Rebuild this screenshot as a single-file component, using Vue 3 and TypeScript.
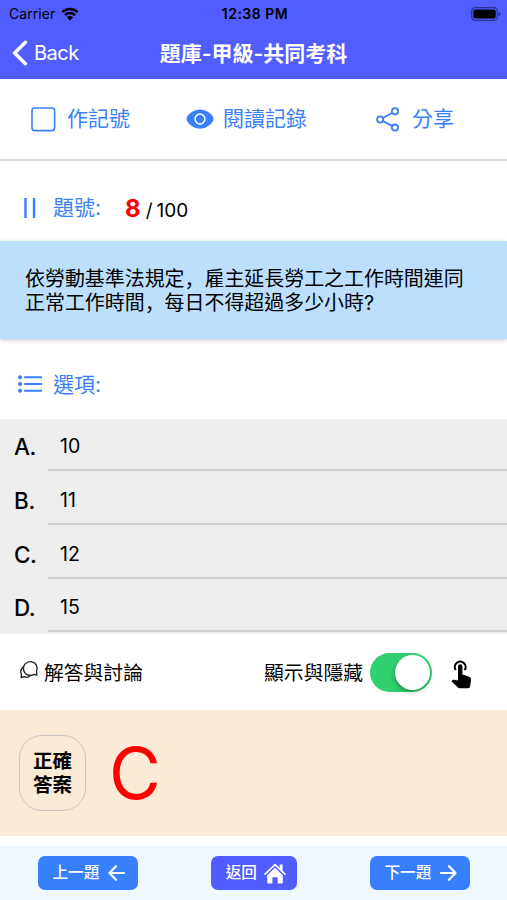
<script setup lang="ts">
import { ref } from 'vue'

interface Option {
  label: string
  text: string
}

const current = ref(8)
const total = 100
const showAnswer = ref(true)
const options: Option[] = [
  { label: 'A.', text: '10' },
  { label: 'B.', text: '11' },
  { label: 'C.', text: '12' },
  { label: 'D.', text: '15' },
]
</script>

<template>
  <div class="screen">
    <header class="top">
      <div class="status">
        <div class="carrier">
          <span>Carrier</span>
          <svg width="18" height="14" viewBox="0 0 18 14">
            <path d="M1.3 5.2a11 11 0 0 1 15.4 0M4 8.1a7.1 7.1 0 0 1 10 0" fill="none" stroke="#000" stroke-width="2.5" />
            <path d="M9 13.6 5.9 10.4a4.4 4.4 0 0 1 6.2 0z" />
          </svg>
        </div>
        <span class="clock">12:38 PM</span>
        <svg class="battery" width="30" height="14" viewBox="0 0 30 14">
          <rect x=".7" y=".7" width="25.6" height="12.6" rx="3.6" fill="none" stroke="#2c3291" stroke-width="1.2" />
          <rect x="2.3" y="2.4" width="22.4" height="9.2" rx="2" />
          <path d="M27.6 4.8q2 .8 2 2.2t-2 2.2z" fill="#2c3291" />
        </svg>
      </div>
      <div class="nav">
        <div class="back">
          <svg width="16" height="26" viewBox="0 0 16 26">
            <path d="M13.4 2.2 2.6 13l10.8 10.8" fill="none" stroke="#fff" stroke-width="3.4" stroke-linecap="round" stroke-linejoin="round" />
          </svg>
          <span>Back</span>
        </div>
        <h1 class="title">題庫-甲級-共同考科</h1>
        <span></span>
      </div>
    </header>

    <div class="tools">
      <div class="tool mark">
        <svg width="25" height="25" viewBox="0 0 25 25">
          <rect x="1" y="1" width="22.6" height="22.6" rx="2.6" fill="none" stroke="currentColor" stroke-width="1.6" />
        </svg>
        <span>作記號</span>
      </div>
      <div class="tool log">
        <svg width="28" height="20" viewBox="0 0 28 20">
          <path d="M14 .5C8 .5 2.8 4.2.7 8.8Q.2 10 .7 11.200C2.800 15.800 8 19.500 14 19.500s11.200-3.700 13.300-8.300q.5-1.200 0-2.400C25.200 4.200 20 .5 14 .5z" fill="currentColor" />
          <circle cx="14" cy="10" r="4.9" fill="none" stroke="#fff" stroke-width="1.5" />
        </svg>
        <span>閱讀記錄</span>
      </div>
      <div class="tool share">
        <svg width="24" height="25" viewBox="0 0 24 25">
          <g fill="none" stroke="currentColor" stroke-width="1.8">
            <circle cx="4.200" cy="12.500" r="3.100" />
            <circle cx="19" cy="4.200" r="3.100" />
            <circle cx="19" cy="20.600" r="3.100" />
            <path d="M6.900 11 16.300 5.700M6.900 14 16.300 19.100" />
          </g>
        </svg>
        <span>分享</span>
      </div>
    </div>

    <div class="number">
      <svg width="13" height="20" viewBox="0 0 13 20">
        <path d="M2.500 0v20M11 0v20" stroke="currentColor" stroke-width="2.400" />
      </svg>
      <span class="heading">題號:</span>
      <span class="count"><b>{{ current }}</b><span class="slash">/</span><span>{{ total }}</span></span>
    </div>

    <section class="question">
      <p><span>依勞動基準法規定</span><span class="comma">，</span><span>雇主延長勞工之工作時間連同</span></p>
      <p><span>正常工作時間</span><span class="comma">，</span><span>每日不得超過多少小時?</span></p>
    </section>

    <div class="choices">
      <svg width="25" height="18" viewBox="0 0 25 18">
        <g fill="currentColor">
          <circle cx="2.100" cy="2.200" r="2" />
          <circle cx="2.100" cy="9" r="2" />
          <circle cx="2.100" cy="15.800" r="2" />
        </g>
        <path d="M6.200 2.200h17.800M6.200 9h17.800M6.200 15.800h17.800" stroke="currentColor" stroke-width="1.900" />
      </svg>
      <span class="heading">選項:</span>
    </div>

    <ul class="options">
      <li v-for="o in options" :key="o.label">
        <span class="letter">{{ o.label }}</span>
        <span class="value">{{ o.text }}</span>
      </li>
    </ul>

    <div class="discussion">
      <svg class="bubbles" width="19" height="19" viewBox="0 0 19 19">
        <g fill="none" stroke="#222" stroke-width="1.300" stroke-linejoin="round">
          <path d="M16.900 15.100l-2.800-.8A6.900 6.900 0 1 1 16.500 11.600z" />
          <path d="M3.200 6.800C.7 9.300.3 12.200 1.500 14.200l-.4 3.300 3-.8c2 1 4.300.6 5.900-.9" />
        </g>
      </svg>
      <span class="talk">解答與討論</span>
      <span class="toggle-label">顯示與隱藏</span>
      <button class="switch" :class="{ on: showAnswer }" @click="showAnswer = !showAnswer"><i></i></button>
      <svg class="tap" width="21" height="29" viewBox="0 0 21 29">
        <path d="M4.700 10A5.400 5.400 0 1 1 13.700 10" fill="none" stroke="#000" stroke-width="2.100" />
        <path d="M7 6.500a2.200 2.200 0 0 1 4.400 0v8.200h1.200l6 2.300q1.600.8 1.500 2.500l-1 6.900q-.3 1.800-2 1.800H8.700q-1 0-1.700-.7L.4 21.200l1.200-1.100q.7-.6 1.600-.4L7 20.500z" />
      </svg>
    </div>

    <section class="answer">
      <div class="badge">正確<br />答案</div>
      <span v-if="showAnswer" class="result">C</span>
    </section>

    <footer class="footer">
      <button class="btn prev">
        <span>上一題</span>
        <svg width="17" height="16" viewBox="0 0 17 16">
          <path d="M8 1.200 1.500 8 8 14.800M1.700 8H16" fill="none" stroke="#fff" stroke-width="2.100" stroke-linecap="round" stroke-linejoin="round" />
        </svg>
      </button>
      <button class="btn home">
        <span>返回</span>
        <svg width="22" height="21" viewBox="0 0 22 21">
          <path d="M1 11.200 11 1.600l10 9.600" fill="none" stroke="#fff" stroke-width="1.700" stroke-linecap="round" />
          <path d="M15.600 1.600h3v6.200l-3-2.900zM11 4.700l7.800 7.500v7.300q0 .9-.9.900h-4.300v-6.200H8.400v6.200H4.100q-.9 0-.9-.9v-7.300z" fill="#fff" />
        </svg>
      </button>
      <button class="btn next">
        <span>下一題</span>
        <svg width="17" height="16" viewBox="0 0 17 16">
          <path d="M9 1.200 15.500 8 9 14.800M15.300 8H1" fill="none" stroke="#fff" stroke-width="2.100" stroke-linecap="round" stroke-linejoin="round" />
        </svg>
      </button>
    </footer>
  </div>
</template>

<style>
body {
  margin: 0;
  background: #fff;
}
</style>

<style scoped>
.screen {
  width: 507px;
  height: 900px;
  display: flex;
  flex-direction: column;
  overflow: hidden;
  background: #fff;
  color: #000;
  font-family: Inter, "Noto Sans CJK TC", sans-serif;
}
.screen * {
  box-sizing: border-box;
}
svg {
  display: block;
  flex: none;
}
span {
  white-space: nowrap;
}
.top {
  height: 79px;
  background: #505eff;
}
.status {
  height: 27px;
  display: grid;
  grid-template-columns: 1fr auto 1fr;
  align-items: center;
  padding: 1px 6px 0 9px;
  font-size: 14px;
  line-height: 26px;
}
.carrier {
  display: flex;
  align-items: center;
  gap: 6px;
  letter-spacing: 0.05px;
}
.carrier svg {
  margin-bottom: 1px;
}
.clock {
  font-weight: 600;
  font-size: 14px;
  letter-spacing: 0.5px;
}
.battery {
  justify-self: end;
  margin-bottom: 1px;
}
.nav {
  height: 52px;
  display: grid;
  grid-template-columns: 1fr auto 1fr;
  align-items: center;
  padding: 0 12px;
  color: #fff;
}
.back {
  display: flex;
  align-items: center;
  gap: 6px;
  font-size: 20px;
  letter-spacing: -0.5px;
}
.title {
  margin: 0;
  padding-top: 1px;
  font-size: 21px;
  line-height: 30px;
  font-weight: 600;
}
.tools {
  height: 82px;
  display: flex;
  align-items: center;
  padding: 0 53px 0 31px;
  border-bottom: 2px solid #dcdcdc;
  color: #397ff7;
}
.tool {
  display: flex;
  align-items: center;
  font-size: 21px;
  line-height: 30px;
}
.mark {
  gap: 11px;
}
.log {
  gap: 9px;
  margin-left: 56px;
}
.share {
  gap: 12px;
  margin-left: auto;
}
.number {
  height: 80px;
  display: flex;
  align-items: center;
  padding: 13px 0 0 23px;
  color: #397ff7;
}
.heading {
  padding-top: 1px;
  font-size: 21px;
  line-height: 30px;
}
.number .heading {
  margin-left: 17px;
}
.count {
  display: flex;
  align-items: baseline;
  margin: 4px 0 0 24px;
  color: #000;
  font-size: 19px;
  line-height: 30px;
}
.count b {
  color: #f00;
  font-size: 24px;
}
.slash {
  margin: 0 4px 0 5px;
}
.question {
  height: 98px;
  padding: 26px 25px 0;
  background: #bbdffd;
  box-shadow: 0 1px 4px rgba(0, 0, 0, 0.22);
}
.question p {
  height: 24px;
  margin: 0;
  display: flex;
  font-size: 19.950px;
  line-height: 24px;
}
.comma {
  font-family: "Noto Sans CJK JP", sans-serif;
}
.choices {
  height: 80px;
  display: flex;
  align-items: center;
  gap: 10px;
  padding: 10px 0 0 18px;
  color: #397ff7;
}
.options {
  height: 215px;
  margin: 0;
  padding: 0;
  list-style: none;
  background: #eee;
}
.options li {
  height: 53.800px;
  display: flex;
  padding-left: 14px;
}
.letter {
  width: 34px;
  font-size: 22.500px;
  letter-spacing: -0.400px;
  line-height: 56px;
  font-weight: 500;
}
.value {
  flex: 1;
  height: 52px;
  padding-left: 12px;
  border-bottom: 2px solid #d2d2d3;
  font-size: 19.500px;
  line-height: 54px;
}
.discussion {
  height: 76px;
  display: flex;
  align-items: center;
  padding: 0 36px 0 20px;
  font-size: 19.800px;
  line-height: 30px;
}
.bubbles {
  margin-bottom: 6px;
}
.talk {
  margin-left: 5px;
  padding-top: 2px;
}
.toggle-label {
  margin-left: auto;
  padding-top: 2px;
}
.switch {
  width: 62px;
  height: 39px;
  margin-left: 7px;
  padding: 2px;
  display: flex;
  border: 0;
  border-radius: 20px;
  background: #ccc;
}
.switch i {
  width: 35px;
  height: 35px;
  border-radius: 50%;
  background: #fff;
  box-shadow: -1px 2px 4px rgba(0, 0, 0, 0.3);
}
.switch.on {
  justify-content: flex-end;
  background: #30d071;
}
.tap {
  margin-left: 19px;
  margin-right: -1px;
  margin-top: 4px;
}
.answer {
  height: 126px;
  display: flex;
  align-items: center;
  padding-left: 19px;
  background: #faebd7;
}
.badge {
  width: 67px;
  height: 76px;
  margin-bottom: 1px;
  padding-top: 13px;
  border: 1.500px solid #c5c5c7;
  border-radius: 23px;
  text-align: center;
  font-size: 19.500px;
  line-height: 24.500px;
  font-weight: 600;
}
.result {
  margin-left: 23px;
  color: #f00;
  font-size: 71px;
  line-height: 76px;
}
.footer {
  height: 54px;
  margin-top: 10px;
  padding: 10px 37px 0 37.500px;
  display: flex;
  align-items: flex-start;
  justify-content: space-between;
  background: #f0f8ff;
}
.btn {
  width: 100.500px;
  height: 34px;
  display: flex;
  align-items: center;
  justify-content: space-between;
  padding: 0 13px 0 15px;
  border: 0;
  border-radius: 7px;
  background: #377ffd;
  color: #fff;
  font: 500 15.600px/30px Inter, "Noto Sans CJK TC", sans-serif;
}
.home {
  width: 86px;
  padding: 0 11px 0 15px;
  background: #505cff;
}
</style>
